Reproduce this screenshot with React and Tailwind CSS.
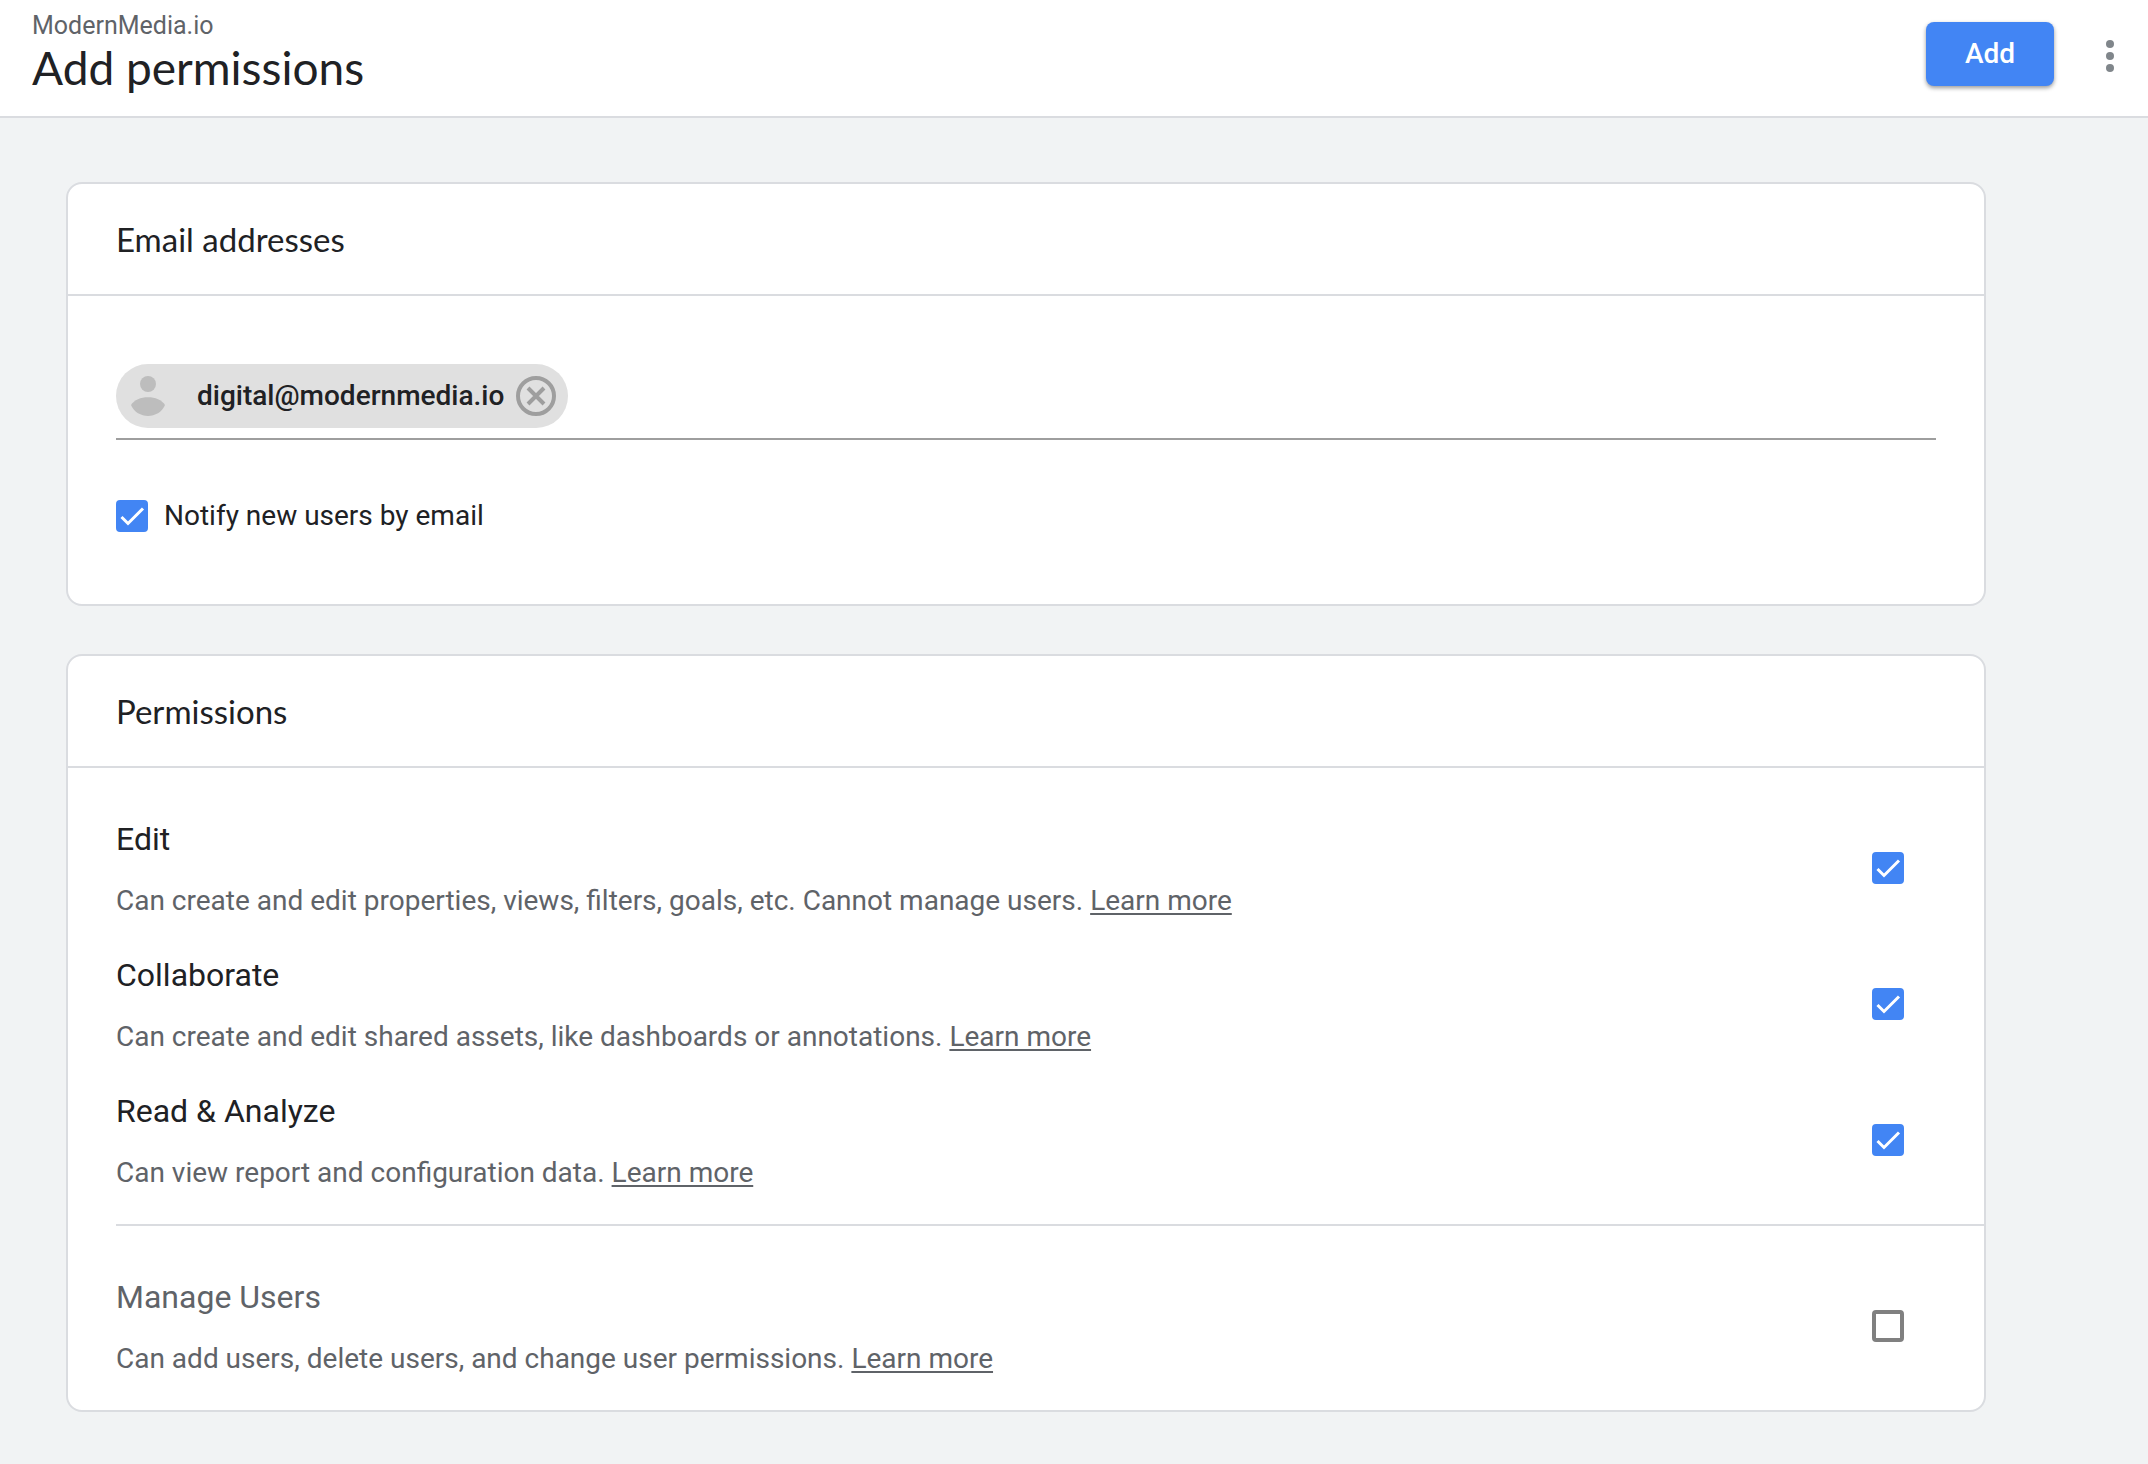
import { useState } from 'react';

const PERMISSIONS = [
  {
    id: 'edit',
    name: 'Edit',
    description: 'Can create and edit properties, views, filters, goals, etc. Cannot manage users.',
  },
  {
    id: 'collaborate',
    name: 'Collaborate',
    description: 'Can create and edit shared assets, like dashboards or annotations.',
  },
  {
    id: 'read',
    name: 'Read & Analyze',
    description: 'Can view report and configuration data.',
  },
];

const MANAGE_USERS = {
  id: 'manage',
  name: 'Manage Users',
  description: 'Can add users, delete users, and change user permissions.',
};

function Checkbox({ id, checked, onChange }) {
  return (
    <span className="grid size-8 shrink-0">
      <input
        id={id}
        type="checkbox"
        checked={checked}
        onChange={onChange}
        className="col-start-1 row-start-1 size-8 cursor-pointer appearance-none rounded-sm border-4 border-[#808080] bg-white checked:border-[#4285f4] checked:bg-[#4285f4]"
      />
      {checked && (
        <svg viewBox="0 0 32 32" className="pointer-events-none col-start-1 row-start-1 size-8" aria-hidden="true">
          <path d="M5.5 17 L12 23.5 L27 8.5" fill="none" stroke="white" strokeWidth="3" />
        </svg>
      )}
    </span>
  );
}

function Card({ title, children }) {
  return (
    <section className="rounded-2xl border-2 border-[#dadce0] bg-white">
      <h2 className="flex h-28 items-center border-b-2 border-[#dadce0] px-12 font-['Lato',sans-serif] text-[33px] leading-10">
        {title}
      </h2>
      {children}
    </section>
  );
}

function PermissionRow({ permission, checked, onChange, muted }) {
  return (
    <li className="flex min-h-34 items-center justify-between gap-8 pr-20">
      <div className="flex flex-col gap-[18px]">
        <label
          htmlFor={permission.id}
          className={`text-[32px] leading-12 ${muted ? 'text-[#5f6368]' : 'text-[#202124]'}`}
        >
          {permission.name}
        </label>
        <p className="text-[28px] leading-10 text-[#5f6368]">
          {permission.description}{' '}
          <a href="#learn-more" className="underline decoration-2 underline-offset-3">
            Learn more
          </a>
        </p>
      </div>
      <Checkbox id={permission.id} checked={checked} onChange={onChange} />
    </li>
  );
}

export default function App() {
  const [emails, setEmails] = useState(['digital@modernmedia.io']);
  const [notify, setNotify] = useState(true);
  const [granted, setGranted] = useState({ edit: true, collaborate: true, read: true, manage: false });

  const toggle = (id) => setGranted((current) => ({ ...current, [id]: !current[id] }));

  return (
    <div className="min-h-screen bg-[#f1f3f4] font-['Roboto',sans-serif] text-[#202124]">
      <header className="flex items-start justify-between border-b-2 border-[#dadce0] bg-white pt-2 pr-[18px] pb-6 pl-8">
        <div>
          <p className="text-[25px] leading-9 text-[#5f6368]">ModernMedia.io</p>
          <h1 className="font-['Lato',sans-serif] text-[46px] leading-12">Add permissions</h1>
        </div>
        <div className="flex items-center gap-9 pt-3.5">
          <button
            type="button"
            className="h-16 w-32 rounded-lg bg-[#4285f4] text-[28px] font-medium text-white shadow-[0_2px_4px_rgba(0,0,0,0.4)]"
          >
            Add
          </button>
          <button type="button" aria-label="More options" className="flex h-16 w-10 items-center justify-center pt-1">
            <svg viewBox="0 0 8 32" className="h-8 w-2 fill-[#80868b]" aria-hidden="true">
              <circle cx="4" cy="4" r="4" />
              <circle cx="4" cy="16" r="4" />
              <circle cx="4" cy="28" r="4" />
            </svg>
          </button>
        </div>
      </header>

      <main className="flex flex-col gap-12 pt-16 pr-[162px] pb-13 pl-[66px]">
        <Card title="Email addresses">
          <div className="px-12 pt-17 pb-18">
            <div className="flex items-center gap-4 border-b-2 border-[#9e9e9e] pb-2.5">
              {emails.map((email) => (
                <span key={email} className="flex h-16 items-center rounded-full bg-[#e0e0e0] px-3">
                  <svg viewBox="0 0 40 40" className="mr-[29px] size-10 fill-[#bdbdbd]" aria-hidden="true">
                    <circle cx="20" cy="8" r="8" />
                    <path d="M3 29 C9 18.5 31 18.5 37 29 C31 43.5 9 43.5 3 29 Z" />
                  </svg>
                  <span className="text-[28px] font-medium">{email}</span>
                  <button
                    type="button"
                    aria-label={`Remove ${email}`}
                    onClick={() => setEmails(emails.filter((item) => item !== email))}
                    className="ml-3"
                  >
                    <svg viewBox="0 0 40 40" className="size-10" fill="none" stroke="#9e9e9e" strokeWidth="4" aria-hidden="true">
                      <circle cx="20" cy="20" r="18" />
                      <path d="M12 12 L28 28 M28 12 L12 28" />
                    </svg>
                  </button>
                </span>
              ))}
              <input type="email" aria-label="Email addresses" className="h-16 min-w-0 flex-1 text-[28px] outline-none" />
            </div>
            <div className="mt-15 flex items-center gap-4">
              <Checkbox id="notify" checked={notify} onChange={() => setNotify(!notify)} />
              <label htmlFor="notify" className="text-[28px] leading-8">
                Notify new users by email
              </label>
            </div>
          </div>
        </Card>

        <Card title="Permissions">
          <ul className="pt-8 pb-4 pl-12">
            {PERMISSIONS.map((permission) => (
              <PermissionRow
                key={permission.id}
                permission={permission}
                checked={granted[permission.id]}
                onChange={() => toggle(permission.id)}
              />
            ))}
          </ul>
          <ul className="ml-12 border-t-2 border-[#dadce0] pt-8 pb-4">
            <PermissionRow
              permission={MANAGE_USERS}
              checked={granted.manage}
              onChange={() => toggle(MANAGE_USERS.id)}
              muted
            />
          </ul>
        </Card>
      </main>
    </div>
  );
}
